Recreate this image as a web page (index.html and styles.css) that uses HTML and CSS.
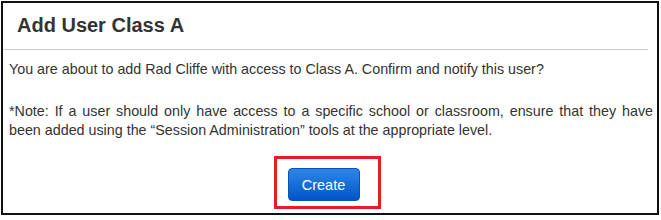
FILE: index.html
```html
<!DOCTYPE html>
<html lang="en">

<head>
    <meta charset="UTF-8">
    <title>Add User Class A</title>
    <link rel="stylesheet" href="styles.css">
</head>

<body>
    <div class="dialog">
        <div class="dialog-header">
            <h2>Add User Class A</h2>
        </div>
        <div class="dialog-body">
            <p>You are about to add Rad Cliffe with access to Class A. Confirm and notify this user?</p>
            <p class="note">*Note: If a user should only have access to a specific school or classroom, ensure that they have been added using the &ldquo;Session Administration&rdquo; tools at the appropriate level.</p>
        </div>
        <div class="dialog-footer">
            <div class="highlight">
                <button class="btn-primary">Create</button>
            </div>
        </div>
    </div>
</body>

</html>
```

FILE: styles.css
```css
body {
    margin: 0;
    font-family: "Liberation Sans", Arial, sans-serif;
    color: #333;
    background-color: #fff;
}

.dialog {
    margin: 1px 2px 0 1px;
    height: 210px;
    border: 2px solid #111;
    display: flex;
    flex-direction: column;
}

.dialog-header {
    height: 44px;
    margin-right: 9px;
    padding: 0 0 2px 14px;
    border-bottom: 1px solid #ccc;
    display: flex;
    align-items: center;
}

.dialog-header h2 {
    margin: 0;
    font-size: 20px;
    font-weight: bold;
    color: #333;
}

.dialog-body {
    padding: 10px 4px 0 6px;
    font-size: 14.3px;
    line-height: 19px;
}

.dialog-body p {
    margin: 0 0 23px;
}

.dialog-body p.note {
    margin-bottom: 0;
    text-align: justify;
}

.dialog-footer {
    margin-top: 16px;
    display: flex;
    justify-content: center;
}

.highlight {
    margin-left: -6px;
    padding: 9px 18px 5px 11px;
    border: 3px solid #e41e26;
}

.btn-primary {
    width: 72px;
    height: 33px;
    padding: 0;
    border: 1px solid #0a52b8;
    border-radius: 4px;
    background: linear-gradient(to bottom, #2f86e6, #0055c8);
    color: #fff;
    font-family: "Liberation Sans", Arial, sans-serif;
    font-size: 14.5px;
    cursor: pointer;
}
```
